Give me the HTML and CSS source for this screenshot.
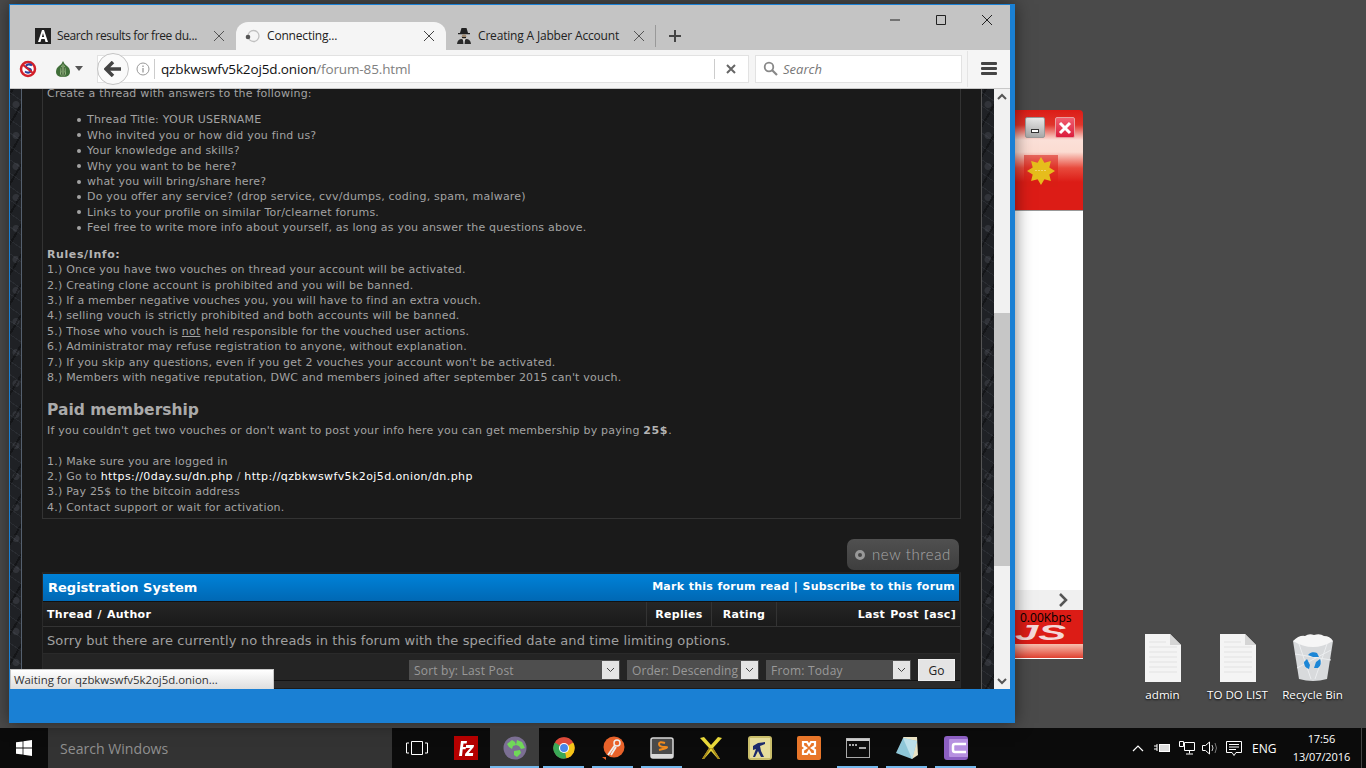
FILE: index.html
```html
<!DOCTYPE html>
<html lang="en">
<head>
    <meta charset="UTF-8">
    <meta name="viewport" content="width=device-width, initial-scale=1.0">
    <title>Connecting...</title>
    <link rel="stylesheet" href="styles.css">
</head>
<body>
    <div class="desktop">

        <!-- red speed widget behind the browser -->
        <div class="widget">
            <div class="widget-top">
                <div class="widget-btns">
                    <span class="w-min"><i></i></span>
                    <span class="w-close">
                        <svg width="14" height="14" viewBox="0 0 14 14"><path d="M2 2l10 10M12 2L2 12" stroke="#fff" stroke-width="3"/></svg>
                    </span>
                </div>
                <span class="w-star-bg">
                    <svg width="30" height="30" viewBox="0 0 30 30"><path d="M15 1l3.400 5.700 6.500-1.600-1.600 6.500L29 15l-5.700 3.400 1.600 6.500-6.500-1.600L15 29l-3.400-5.700-6.500 1.600 1.600-6.500L1 15l5.700-3.400-1.600-6.500 6.500 1.600z" fill="#e6bd1c"/><path d="M9 14.500h12" stroke="#f0d670" stroke-dasharray="2 1"/></svg>
                </span>
            </div>
            <div class="widget-body"></div>
            <div class="widget-arrow">
                <svg width="12" height="14" viewBox="0 0 12 14"><path d="M3 1l6 6-6 6" fill="none" stroke="#555" stroke-width="2.500"/></svg>
            </div>
            <div class="widget-speed">
                <span class="logo-js">JS</span>
                <span class="kbps">0.00Kbps</span>
            </div>
            <div class="widget-foot"></div>
        </div>

        <!-- desktop icons -->
        <div class="icons">
            <div class="desk-icon">
                <svg width="36" height="48" viewBox="0 0 36 48"><path d="M0 0h25l11 11v37H0z" fill="#f4f4f4"/><path d="M25 0l11 11H25z" fill="#d5d5d5"/><path d="M4 8h17M4 13h28M4 18h28M4 23h28M4 28h28M4 33h28M4 38h28" stroke="#e2e2e2"/></svg>
                <span>admin</span>
            </div>
            <div class="desk-icon">
                <svg width="36" height="48" viewBox="0 0 36 48"><path d="M0 0h25l11 11v37H0z" fill="#f4f4f4"/><path d="M25 0l11 11H25z" fill="#d5d5d5"/><path d="M4 8h17M4 13h28M4 18h28M4 23h28M4 28h28M4 33h28M4 38h28" stroke="#e2e2e2"/></svg>
                <span>TO DO LIST</span>
            </div>
            <div class="desk-icon">
                <svg width="42" height="48" viewBox="0 0 42 48"><path d="M1 7h40l-6 38q-14 4-28 0z" fill="#d8dadc"/><path d="M7 10l12 35M35 10L23 45M3 20l36 6M39 16L5 34" stroke="#eceef0"/><path d="M1 7q6-6 12-5 4-3 9-1 6-2 10 1 6 0 9 5-10 6-20 6T1 7z" fill="#f6f6f6"/><path d="M16 21a7 7 0 0 1 9-2l2 4-6 0zM28 25a7 7 0 0 1-2 9l-4 0 2-6zM17 35a7 7 0 0 1-5-7l3-3 3 6z" fill="#1c86d6"/></svg>
                <span>Recycle Bin</span>
            </div>
        </div>

        <!-- browser window -->
        <div class="browser">
            <div class="tabstrip">
                <div class="win-controls">
                    <svg width="12" height="12" viewBox="0 0 12 12"><path d="M1 6h10" stroke="#222"/></svg>
                    <svg width="12" height="12" viewBox="0 0 12 12"><path d="M1.500 1.500h9v9h-9z" fill="none" stroke="#222"/></svg>
                    <svg width="12" height="12" viewBox="0 0 12 12"><path d="M1 1l10 10M11 1L1 11" stroke="#222"/></svg>
                </div>
                <div class="tabs">
                    <div class="tab tab-first">
                        <svg class="fav" width="16" height="16" viewBox="0 0 16 16"><rect width="16" height="16" fill="#222"/><path d="M3 14L7 2h2l4 12h-2.500l-.8-3H6.300l-.8 3zM6.900 9h2.200L8 5z" fill="#fff"/></svg>
                        <span class="tab-title">Search results for free du...</span>
                        <svg class="tab-x" width="12" height="12" viewBox="0 0 12 12"><path d="M1 1l10 10M11 1L1 11" stroke="#555"/></svg>
                    </div>
                    <div class="tab tab-active">
                        <svg class="fav" width="16" height="16" viewBox="0 0 16 16"><circle cx="8.500" cy="8" r="5.500" fill="none" stroke="#c0c0c0" stroke-width="1.300"/><circle cx="3" cy="9" r="2.300" fill="#555"/></svg>
                        <span class="tab-title">Connecting...</span>
                        <svg class="tab-x" width="12" height="12" viewBox="0 0 12 12"><path d="M1 1l10 10M11 1L1 11" stroke="#444"/></svg>
                    </div>
                    <div class="tab tab-last">
                        <svg class="fav" width="16" height="16" viewBox="0 0 16 16"><path d="M4 5l1.500-5h5L12 5h2v1.200H2V5z" fill="#222"/><circle cx="8" cy="8.500" r="2.300" fill="#a08a70"/><path d="M6 9h4v1H6z" fill="#222"/><path d="M1 16q.5-5 5-5l2 2 2-2q4.500 0 5 5z" fill="#2a2a2a"/><path d="M7 11h2l-.5 5h-1z" fill="#ddd"/></svg>
                        <span class="tab-title">Creating A Jabber Account</span>
                        <svg class="tab-x" width="12" height="12" viewBox="0 0 12 12"><path d="M1 1l10 10M11 1L1 11" stroke="#555"/></svg>
                    </div>
                    <span class="tab-sep"></span>
                    <svg class="tab-new" width="14" height="14" viewBox="0 0 14 14"><path d="M7 1v12M1 7h12" stroke="#444" stroke-width="2"/></svg>
                </div>
            </div>

            <div class="navbar">
                <svg class="nav-stop" width="18" height="18" viewBox="0 0 18 18"><circle cx="9" cy="9" r="7" fill="#fff" stroke="#d3202a" stroke-width="2.500"/><path d="M13 5.500q-2-1.500-4-1-2 .5-2 2t2.500 2 2.500 2-2 2-4-1" fill="none" stroke="#2a3f9d" stroke-width="2"/><path d="M3.500 4.500l11 9" stroke="#d3202a" stroke-width="2"/></svg>
                <svg class="nav-onion" width="16" height="18" viewBox="0 0 16 18"><path d="M8 1q1 3 4 5t3 6q0 5-7 5T1 12q0-4 3-6t4-5z" fill="#3f6e38"/><path d="M8 3q-3 5-3 9t3 5zM8 3q3 5 3 9t-3 5z" fill="#a5c88e"/><path d="M8 3v14M6.500 7q-1 5 .5 9M9.500 7q1 5-.5 9" stroke="#2f4a2a" stroke-width=".8" fill="none"/></svg>
                <svg class="nav-caret" width="8" height="5" viewBox="0 0 8 5"><path d="M0 0h8L4 5z" fill="#555"/></svg>
                <div class="urlbar">
                    <span class="back-btn">
                        <svg width="18" height="16" viewBox="0 0 18 16"><path d="M9 1L2 8l7 7M2.500 8H17" fill="none" stroke="#444" stroke-width="3.500"/></svg>
                    </span>
                    <svg class="url-info" width="14" height="14" viewBox="0 0 14 14"><circle cx="7" cy="7" r="6" fill="none" stroke="#999"/><path d="M7 6v4.500M7 3.500v1.500" stroke="#999" stroke-width="1.300"/></svg>
                    <span class="url-text">qzbkwswfv5k2oj5d.onion<span class="url-path">/forum-85.html</span></span>
                    <span class="url-sep"></span>
                    <svg class="url-x" width="10" height="10" viewBox="0 0 10 10"><path d="M1 1l8 8M9 1L1 9" stroke="#666" stroke-width="2"/></svg>
                </div>
                <div class="searchbar">
                    <svg width="15" height="15" viewBox="0 0 15 15"><circle cx="6" cy="6" r="4.300" fill="none" stroke="#888" stroke-width="1.800"/><path d="M9 9l5 5" stroke="#888" stroke-width="2.200"/></svg>
                    <span>Search</span>
                </div>
                <span class="nav-sep"></span>
                <div class="menu-btn"><i></i><i></i><i></i></div>
            </div>

            <div class="page">
                <div class="pattern pattern-left"></div>
                <div class="forum">
                    <div class="rules-box">
                        <div class="line">Create a thread with answers to the following:</div>
                        <ul class="rules-list">
                            <li>Thread Title: YOUR USERNAME</li>
                            <li>Who invited you or how did you find us?</li>
                            <li>Your knowledge and skills?</li>
                            <li>Why you want to be here?</li>
                            <li>what you will bring/share here?</li>
                            <li>Do you offer any service? (drop service, cvv/dumps, coding, spam, malware)</li>
                            <li>Links to your profile on similar Tor/clearnet forums.</li>
                            <li>Feel free to write more info about yourself, as long as you answer the questions above.</li>
                        </ul>
                        <div class="line"><b>Rules/Info:</b></div>
                        <div class="line">1.) Once you have two vouches on thread your account will be activated.</div>
                        <div class="line">2.) Creating clone account is prohibited and you will be banned.</div>
                        <div class="line">3.) If a member negative vouches you, you will have to find an extra vouch.</div>
                        <div class="line">4.) selling vouch is strictly prohibited and both accounts will be banned.</div>
                        <div class="line">5.) Those who vouch is <u>not</u> held responsible for the vouched user actions.</div>
                        <div class="line">6.) Administrator may refuse registration to anyone, without explanation.</div>
                        <div class="line">7.) If you skip any questions, even if you get 2 vouches your account won't be activated.</div>
                        <div class="line">8.) Members with negative reputation, DWC and members joined after september 2015 can't vouch.</div>
                        <h2 class="paid-title">Paid membership</h2>
                        <div class="line">If you couldn't get two vouches or don't want to post your info here you can get membership by paying <b>25$</b>.</div>
                        <div class="line">&nbsp;</div>
                        <div class="line">1.) Make sure you are logged in</div>
                        <div class="line">2.) Go to <a href="#">https://0day.su/dn.php</a> / <a href="#">http://qzbkwswfv5k2oj5d.onion/dn.php</a></div>
                        <div class="line">3.) Pay 25$ to the bitcoin address</div>
                        <div class="line">4.) Contact support or wait for activation.</div>
                    </div>

                    <div class="actions">
                        <a class="new-thread" href="#"><i></i>new thread</a>
                    </div>

                    <div class="thread-table">
                        <div class="table-head">
                            <strong>Registration System</strong>
                            <span>Mark this forum read | Subscribe to this forum</span>
                        </div>
                        <div class="table-cols">
                            <span class="col-main">Thread / Author</span>
                            <span class="col-replies">Replies</span>
                            <span class="col-rating">Rating</span>
                            <span class="col-last">Last Post [asc]</span>
                        </div>
                        <div class="table-empty">Sorry but there are currently no threads in this forum with the specified date and time limiting options.</div>
                        <div class="table-sort">
                            <div class="fake-select sel-sort"><span>Sort by: Last Post</span><i><svg width="9" height="6" viewBox="0 0 9 6"><path d="M1 1l3.500 3.500L8 1" fill="none" stroke="#444"/></svg></i></div>
                            <div class="fake-select sel-order"><span>Order: Descending</span><i><svg width="9" height="6" viewBox="0 0 9 6"><path d="M1 1l3.500 3.500L8 1" fill="none" stroke="#444"/></svg></i></div>
                            <div class="fake-select sel-from"><span>From: Today</span><i><svg width="9" height="6" viewBox="0 0 9 6"><path d="M1 1l3.500 3.500L8 1" fill="none" stroke="#444"/></svg></i></div>
                            <button class="go-btn">Go</button>
                        </div>
                        <div class="table-foot"></div>
                    </div>
                </div>
                <div class="pattern pattern-right"></div>
                <div class="scrollbar">
                    <svg width="10" height="7" viewBox="0 0 10 7"><path d="M1 6l4-4 4 4" fill="none" stroke="#555" stroke-width="2"/></svg>
                    <div class="track"><div class="thumb"></div></div>
                    <svg width="10" height="7" viewBox="0 0 10 7"><path d="M1 1l4 4 4-4" fill="none" stroke="#555" stroke-width="2"/></svg>
                </div>
            </div>

            <div class="status-tip">Waiting for qzbkwswfv5k2oj5d.onion...</div>
        </div>
    </div>

    <div class="taskbar">
        <div class="start">
            <svg width="16" height="16" viewBox="0 0 16 16"><path d="M0 2.300l6.600-.9v6.200H0zM7.400 1.300L16 0v7.600H7.400zM0 8.400h6.600v6.200L0 13.700zM7.400 8.400H16V16l-8.600-1.300z" fill="#fff"/></svg>
        </div>
        <div class="search-win">Search Windows</div>
        <div class="task-view">
            <svg width="22" height="16" viewBox="0 0 22 16"><path d="M5.500 1.500h11v13h-11zM3 3H.5v10H3M19 3h2.500v10H19" fill="none" stroke="#fff"/></svg>
        </div>
        <div class="task-item">
            <svg width="24" height="24" viewBox="0 0 24 24"><rect width="24" height="24" fill="#b40000"/><path d="M5 20L7 5h6l-.4 2.500H9.500L9 11h3l-.4 2.300H8.700L8 20zM12 9h8l-.3 2-5 6h4.500l-.3 3h-8l.3-2.300 5-5.700H12z" fill="#fff"/></svg>
        </div>
        <div class="task-item task-active on">
            <svg width="24" height="24" viewBox="0 0 24 24"><circle cx="12" cy="12" r="11.500" fill="#7b6f93"/><path d="M4 8l5-4 3 2 1 3-3 1-1 3-3-2zM14 4l5 2 3 6-4 1-2-3-3-1zM11 15l6-1 1 3-4 4-3-2z" fill="#70d858"/></svg>
        </div>
        <div class="task-item on">
            <svg width="22" height="22" viewBox="0 0 24 24"><circle cx="12" cy="12" r="11.500" fill="#dd4a3a"/><path d="M12 12L22 6a11.500 11.500 0 0 1-7.500 17.200z" fill="#f5c518"/><path d="M12 12L14.500 23.200A11.500 11.500 0 0 1 2 6z" fill="#3aa856"/><path d="M2 6a11.500 11.500 0 0 1 20 0H12z" fill="#dd4a3a"/><circle cx="12" cy="12" r="5.500" fill="#fff"/><circle cx="12" cy="12" r="4.300" fill="#4a86e8"/></svg>
        </div>
        <div class="task-item on">
            <svg width="24" height="24" viewBox="0 0 24 24"><circle cx="13" cy="11" r="10.500" fill="#e8622a"/><path d="M7 19L14 9M10 19l5-8" stroke="#eee" stroke-width="1.800"/><circle cx="16" cy="7" r="3" fill="none" stroke="#eee" stroke-width="1.500"/><path d="M1 21h4v3z" fill="#e8622a"/></svg>
        </div>
        <div class="task-item on">
            <svg width="24" height="22" viewBox="0 0 24 22"><rect x="1" y="1" width="22" height="20" rx="2" fill="#4a4a4a" stroke="#d8d8d8" stroke-width="1.500"/><rect x="1" y="17" width="22" height="4" fill="#d8d8d8"/><path d="M15 6q-6-2-6 1t6 3-6 3" fill="none" stroke="#f28b1c" stroke-width="2"/></svg>
        </div>
        <div class="task-item">
            <svg width="24" height="24" viewBox="0 0 24 24"><path d="M1 2l4-1 7 8 7-8 4 1-9 10 7 11h-2l-7-8-7 8H3l7-11z" fill="#e8d83a"/><path d="M12 12l7 11h2l-7-11zM12 12L5 23H3l7-11z" fill="#a98a1c"/></svg>
        </div>
        <div class="task-item">
            <svg width="24" height="24" viewBox="0 0 24 24"><rect width="24" height="24" rx="3" fill="#c9bd6a"/><rect x="2" y="2" width="20" height="20" fill="#e6dd9c"/><path d="M5 10l5-3 7-1 0 2-5 2 1 5 3 6h-3l-3-6-3 6H5l3-8-3 1z" fill="#1c2a6c"/></svg>
        </div>
        <div class="task-item">
            <svg width="24" height="24" viewBox="0 0 24 24"><rect width="24" height="24" rx="2" fill="#e8762a"/><path d="M6 6h4l2 3 2-3h4v4l-3 2 3 2v4h-4l-2-3-2 3H6v-4l3-2-3-2z" fill="none" stroke="#fff" stroke-width="2.200"/></svg>
        </div>
        <div class="task-item on">
            <svg width="24" height="20" viewBox="0 0 24 20"><rect x=".5" y=".5" width="23" height="19" fill="#0c0c0c" stroke="#aaa"/><rect x=".5" y=".5" width="23" height="2.500" fill="#ccc"/><path d="M3 7h2M6 7h2M9 7h2M13 10h7" stroke="#ddd" stroke-width="1.500"/></svg>
        </div>
        <div class="task-item on">
            <svg width="24" height="24" viewBox="0 0 24 24"><path d="M8 1h14l1 18-6 4z" fill="#e9e2c4"/><path d="M8 2L1 17l16 6 5-18z" fill="#8fc7d8"/><path d="M8 2l14 3-5 18z" fill="#bde0ea"/></svg>
        </div>
        <div class="task-item on">
            <svg width="24" height="24" viewBox="0 0 24 24"><rect width="24" height="24" rx="3" fill="#8c5fc2"/><rect x="5" y="3" width="19" height="18" rx="1" fill="#b690e0"/><path d="M22 8H11q-2 0-2 2v4q0 2 2 2h11" fill="none" stroke="#fff" stroke-width="2.500"/></svg>
        </div>
        <div class="tray">
            <svg class="tr-chev" width="12" height="8" viewBox="0 0 12 8"><path d="M1 7l5-5 5 5" fill="none" stroke="#fff" stroke-width="1.200"/></svg>
            <svg class="tr-power" width="16" height="10" viewBox="0 0 16 10"><path d="M0 3h3M0 6h3M3 1v7" stroke="#fff"/><rect x="5.500" y="1.500" width="10" height="7" fill="#ddd" stroke="#fff"/></svg>
            <svg class="tr-net" width="16" height="14" viewBox="0 0 16 14"><path d="M5.500 1.500h10v8h-10zM10.500 9.500v3M7 13h7M.5 .5h4v5h-4z" fill="none" stroke="#fff"/></svg>
            <svg class="tr-vol" width="16" height="14" viewBox="0 0 16 14"><path d="M.5 4.500h3L7.500 1v12l-4-3.500h-3z" fill="none" stroke="#fff"/><path d="M10 4q2 3 0 6" fill="none" stroke="#ccc"/><path d="M13 2q3 5 0 10" fill="none" stroke="#777"/></svg>
            <svg class="tr-note" width="16" height="15" viewBox="0 0 16 15"><path d="M.5 .5h15v11H10l-2 3-2-3H.5z" fill="none" stroke="#fff"/><path d="M3 3.500h10M3 6h10M3 8.500h7" stroke="#fff"/></svg>
            <span class="tr-lang">ENG</span>
            <div class="clock"><span>17:56</span><span>13/07/2016</span></div>
            <span class="show-desk"></span>
        </div>
    </div>
</body>
</html>
```

FILE: styles.css
```css
* {
    box-sizing: border-box;
}
html, body {
    margin: 0;
    height: 100%;
}
body {
    width: 1366px;
    height: 768px;
    overflow: hidden;
    background: #4a4a4a;
    font-family: "Open Sans", "Noto Sans", sans-serif;
}
.desktop {
    position: relative;
    height: 728px;
}

/* speed widget */
.widget {
    position: absolute;
    left: 1015px;
    top: 110px;
    width: 68px;
    height: 549px;
    display: flex;
    flex-direction: column;
    border-radius: 0 4px 0 0;
    overflow: hidden;
}
.widget-top {
    position: relative;
    height: 101px;
    background: linear-gradient(#dc1c16 0, #e0352b 15px, #fbe0d8 30px, #fbdcd2 42px, #e84a3c 58px, #dc1c16 72px);
    border-bottom: 1px solid #999;
}
.widget-btns {
    display: flex;
    gap: 10px;
    padding: 7px 0 0 10px;
}
.w-min, .w-close {
    width: 20px;
    height: 21px;
    border-radius: 2px;
    display: flex;
    align-items: center;
    justify-content: center;
}
.w-min {
    background: linear-gradient(#e8e8e8, #a8a8a8);
    border: 1px solid #999;
}
.w-min i {
    width: 8px;
    height: 4px;
    background: #fff;
    border: 1px solid #333;
    margin-top: 6px;
}
.w-close {
    background: linear-gradient(#f06070, #dc1c3c);
    border: 1px solid #e8a0a0;
}
.w-star-bg {
    position: absolute;
    left: 9px;
    top: 45px;
    width: 34px;
    height: 32px;
    background: rgba(217, 31, 22, 0.55);
    display: flex;
    align-items: center;
    justify-content: center;
}
.widget-body {
    flex: 1;
    background: #fff;
}
.widget-arrow {
    height: 20px;
    background: #f0f0f0;
    display: flex;
    align-items: center;
    justify-content: flex-end;
    padding-right: 14px;
}
.widget-speed {
    position: relative;
    height: 34px;
    background: #dc1c16;
}
.logo-js {
    position: absolute;
    left: 0;
    top: 13px;
    font: italic 900 22px/20px "Liberation Sans", sans-serif;
    color: #f4d8d8;
    transform: scaleX(1.900);
    transform-origin: left center;
}
.kbps {
    position: absolute;
    left: 5px;
    top: 0;
    font: 12px/15px "Open Sans", sans-serif;
    color: #000;
}
.widget-foot {
    height: 15px;
    background: linear-gradient(#f7c0b0, #e04030);
    border-bottom: 1px solid #fff;
}

/* desktop icons */
.icons {
    position: absolute;
    left: 1125px;
    top: 634px;
    display: flex;
}
.desk-icon {
    width: 75px;
    display: flex;
    flex-direction: column;
    align-items: center;
    gap: 4px;
    color: #fff;
    font-size: 11.600px;
    line-height: 17px;
    text-shadow: 0 1px 2px #000;
}

/* browser window */
.browser {
    position: absolute;
    left: 9px;
    top: 4px;
    width: 1006px;
    height: 719px;
    background: #1a80d4;
    padding: 1px 5px 34px 1px;
    display: flex;
    flex-direction: column;
    box-shadow: 0 0 16px rgba(0, 0, 0, 0.5);
}
.tabstrip {
    position: relative;
    height: 45px;
    background: #c4c4c4;
    flex: none;
}
.win-controls {
    position: absolute;
    right: 0;
    top: 9px;
    width: 121px;
    display: flex;
    justify-content: space-between;
    padding-right: 17px;
}
.tabs {
    position: absolute;
    left: 12px;
    right: 0;
    bottom: 0;
    height: 28px;
    display: flex;
    align-items: center;
    font-size: 12px;
    color: #222;
}
.tab {
    height: 28px;
    display: flex;
    align-items: center;
    padding-left: 13px;
    padding-bottom: 1px;
    flex: none;
}
.tab-first {
    width: 214px;
}
.tab-first .tab-title {
    letter-spacing: -.38px;
}
.tab-first .tab-x, .tab-active .tab-x {
    margin-right: 11px;
}
.tab-active {
    width: 210px;
    background: #f5f5f5;
    border-radius: 12px 12px 0 0;
    padding-left: 9px;
}
.tab-last {
    width: 209px;
    padding-left: 10px;
}
.fav {
    flex: none;
    margin-right: 6px;
}
.tab-title {
    flex: 1;
    white-space: nowrap;
    overflow: hidden;
    letter-spacing: -.18px;
}
.tab-x {
    flex: none;
    margin-right: 10px;
}
.tab-sep {
    width: 1px;
    height: 22px;
    background: #999;
}
.tab-new {
    margin-left: 12px;
}
.navbar {
    height: 39px;
    background: #f5f5f5;
    border-bottom: 1px solid #c8c8c8;
    display: flex;
    align-items: center;
    flex: none;
    padding-bottom: 1px;
}
.nav-stop {
    margin-left: 9px;
}
.nav-onion {
    margin-left: 18px;
}
.nav-caret {
    margin-left: 4px;
}
.urlbar {
    position: relative;
    width: 652px;
    height: 28px;
    margin-left: 14px;
    background: #fff;
    border: 1px solid #e2e2e2;
    display: flex;
    align-items: center;
    padding-left: 38px;
    font-size: 13.500px;
    color: #111;
}
.back-btn {
    position: absolute;
    left: -1px;
    top: -3px;
    width: 32px;
    height: 32px;
    border-radius: 50%;
    background: #fafafa;
    border: 1px solid #c4c4c4;
    display: flex;
    align-items: center;
    justify-content: center;
}
.url-info {
    flex: none;
}
.url-text {
    margin-left: 4px;
    padding-left: 6px;
    border-left: 1px solid #ccc;
    line-height: 20px;
    letter-spacing: -.14px;
    flex: 1;
}
.url-path {
    color: #808080;
}
.url-sep {
    width: 1px;
    height: 20px;
    background: #ccc;
}
.url-x {
    margin: 0 12px 0 11px;
}
.searchbar {
    width: 207px;
    height: 28px;
    margin-left: 6px;
    background: #fff;
    border: 1px solid #e2e2e2;
    display: flex;
    align-items: center;
    gap: 5px;
    padding-left: 7px;
    font-size: 13px;
    font-style: italic;
    color: #777;
}
.nav-sep {
    width: 1px;
    height: 36px;
    background: #e4e4e4;
    margin-left: 5px;
}
.menu-btn {
    width: 16px;
    margin-left: 13px;
    display: flex;
    flex-direction: column;
    gap: 2px;
}
.menu-btn i {
    height: 3px;
    background: #444;
    border-radius: 1px;
}
.page {
    flex: 1;
    min-height: 0;
    display: flex;
    overflow: hidden;
}
.pattern {
    width: 12px;
    flex: none;
    background-color: #1f2125;
    background-image:
        repeating-linear-gradient(35deg, transparent 0 4px, rgba(90, 96, 106, 0.18) 4px 5px, transparent 5px 11px),
        repeating-linear-gradient(-60deg, transparent 0 6px, rgba(0, 0, 0, 0.35) 6px 8px, transparent 8px 15px),
        radial-gradient(circle at 50% 50%, rgba(120, 125, 135, 0.2) 0 3px, transparent 4px);
    background-size: auto, auto, 12px 31px;
}
.pattern-left {
    border-right: 1px solid #55606e;
}
.pattern-right {
    width: 13px;
    border-left: 1px solid #555;
}
.forum {
    width: 959px;
    flex: none;
    background: #1a1a1a;
    padding: 0 20px;
    font-family: "DejaVu Sans", Verdana, sans-serif;
    font-size: 11px;
    line-height: 15.400px;
    letter-spacing: .215px;
    color: #a3a3a3;
}
.rules-box {
    margin-top: -3px;
    height: 433px;
    border: 1px solid #333;
    border-top: 0;
    padding: 0 4px;
}
.line {
    white-space: nowrap;
}
.line b {
    color: #b4b4b4;
    letter-spacing: .6px;
}
.line a {
    color: #fff;
    text-decoration: none;
    letter-spacing: .4px;
}
.rules-list {
    margin: 10.900px 0 11.200px;
    padding: 0 0 0 30px;
    list-style: none;
}
.rules-list li {
    display: flex;
    align-items: center;
}
.rules-list li::before {
    content: "";
    flex: none;
    width: 4px;
    height: 4px;
    border-radius: 50%;
    background: #a3a3a3;
    margin-right: 6px;
}
.paid-title {
    margin: 14px 0 0;
    font-size: 15.500px;
    line-height: 23.300px;
    letter-spacing: 0;
    color: #aaa;
}
.actions {
    display: flex;
    justify-content: flex-end;
    padding: 20px 2px 0 0;
}
.new-thread {
    width: 112px;
    height: 31px;
    border-radius: 7px;
    background: linear-gradient(#505050, #3e3e3e);
    display: flex;
    align-items: center;
    padding-left: 8px;
    font: 300 15px/31px Lato, sans-serif;
    letter-spacing: .6px;
    color: #a8a8a8;
    text-decoration: none;
}
.new-thread i {
    width: 10px;
    height: 10px;
    border-radius: 50%;
    border: 3px solid #999;
    margin-right: 7px;
}
.thread-table {
    margin-top: 2px;
    background: #222;
    border: 1px solid #2a2a2a;
    border-top-color: #222;
}
.table-head {
    height: 28px;
    margin: 1px 1px 0 0;
    background: linear-gradient(#0082d8, #0068b4);
    border-bottom: 1px solid #111;
    display: flex;
    justify-content: space-between;
    align-items: center;
    padding: 1px 4px 0 5px;
    color: #fff;
    font-weight: bold;
    font-size: 11px;
    word-spacing: .5px;
}
.table-head strong {
    font-size: 13px;
    letter-spacing: 0;
    word-spacing: 0;
}
.table-head span {
    padding-bottom: 2px;
}
.table-cols {
    height: 25px;
    display: flex;
    align-items: center;
    background: linear-gradient(#262626, #1a1a1a);
    border-bottom: 1px solid #333;
    color: #fff;
    font-weight: bold;
    letter-spacing: .3px;
    word-spacing: 1px;
}
.table-cols span {
    height: 100%;
    display: flex;
    align-items: center;
    justify-content: center;
    padding-top: 2px;
}
.col-main {
    flex: 1;
    justify-content: flex-start !important;
    padding-left: 4px;
}
.col-replies {
    width: 65px;
    border-left: 1px solid #333;
}
.col-rating {
    width: 65px;
    border-left: 1px solid #333;
}
.col-last {
    width: 184px;
    border-left: 1px solid #333;
    justify-content: flex-end !important;
    padding-right: 4px;
}
.table-empty {
    height: 27px;
    background: #1a1a1a;
    border-bottom: 1px solid #2a2a2a;
    padding: 1px 0 0 4px;
    display: flex;
    align-items: center;
    font-size: 13px;
    letter-spacing: .12px;
    color: #a0a0a0;
}
.table-sort {
    height: 26px;
    background: #242424;
    display: flex;
    align-items: flex-end;
    justify-content: flex-end;
    padding: 0 5px 0 0;
    gap: 7px;
}
.fake-select {
    height: 20px;
    background: #4e4e4e;
    display: flex;
    align-items: center;
    justify-content: space-between;
    padding: 1px 0 0 5px;
    font-family: "Open Sans", sans-serif;
    font-size: 12px;
    letter-spacing: .2px;
    color: #999;
}
.fake-select i {
    width: 17px;
    height: 18px;
    margin: -1px 1px 0 0;
    background: #e4e4e4;
    display: flex;
    align-items: center;
    justify-content: center;
}
.sel-sort {
    width: 211px;
}
.sel-order {
    width: 132px;
    letter-spacing: .08px;
}
.sel-from {
    width: 145px;
}
.go-btn {
    width: 37px;
    height: 22px;
    margin-bottom: -1px;
    background: #e4e4e4;
    border: 1px solid #eee;
    padding: 0;
    font: 12px "Open Sans", sans-serif;
    color: #222;
}
.table-foot {
    height: 7px;
    background: #2a2a2a;
    border-top: 1px solid #111;
}
.scrollbar {
    width: 16px;
    flex: none;
    background: #f1f1f1;
    display: flex;
    flex-direction: column;
    align-items: center;
    padding: 4px 0;
}
.track {
    flex: 1;
    width: 100%;
    padding-top: 211px;
    margin: 2px 0;
}
.thumb {
    height: 253px;
    background: #c6c6c6;
}
.status-tip {
    position: absolute;
    left: 1px;
    bottom: 34px;
    width: 264px;
    height: 20px;
    background: linear-gradient(#fff, #dedede);
    border: 1px solid #c8c8c8;
    border-bottom: 0;
    padding-left: 3px;
    font-size: 11.400px;
    line-height: 20px;
    color: #333;
}

/* taskbar */
.taskbar {
    height: 40px;
    background: #0b0b0b;
    display: flex;
    align-items: stretch;
}
.start {
    width: 48px;
    flex: none;
    display: flex;
    align-items: center;
    justify-content: center;
}
.search-win {
    width: 344px;
    flex: none;
    background: #333;
    padding-left: 12px;
    display: flex;
    align-items: center;
    font-size: 14.100px;
    color: #8f8f8f;
}
.task-view {
    width: 49px;
    flex: none;
    display: flex;
    align-items: center;
    justify-content: center;
}
.task-item {
    width: 49px;
    flex: none;
    display: flex;
    align-items: center;
    justify-content: center;
    position: relative;
}
.task-active {
    background: #3c3c3c;
}
.on::after {
    content: "";
    position: absolute;
    left: 4px;
    right: 4px;
    bottom: 0;
    height: 2px;
    background: #76b9ed;
}
.task-active::after {
    left: 0;
    right: 0;
}
.tray {
    flex: 1;
    display: flex;
    align-items: center;
    padding-left: 152px;
    color: #fff;
    font-size: 12px;
}
.tr-power {
    margin-left: 10px;
}
.tr-net {
    margin-left: 9px;
}
.tr-vol {
    margin-left: 7px;
}
.tr-note {
    margin-left: 8px;
}
.tr-lang {
    margin-left: 10px;
}
.clock {
    width: 72px;
    flex: none;
    margin-left: 9px;
    display: flex;
    flex-direction: column;
    align-items: center;
    font-size: 11px;
    letter-spacing: -.1px;
    line-height: 18px;
}
.show-desk {
    width: 1px;
    height: 40px;
    background: #444;
    margin-left: 4px;
}
```
